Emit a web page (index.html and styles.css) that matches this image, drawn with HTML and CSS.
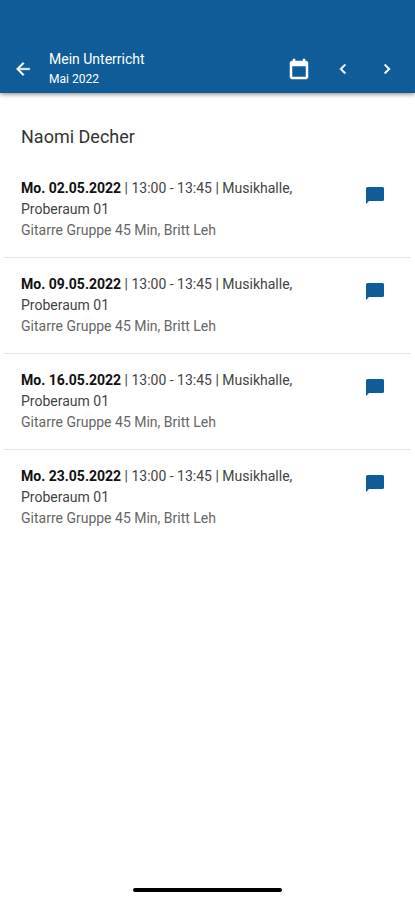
FILE: index.html
```
<!DOCTYPE html>
<html lang="de">
<head>
    <meta charset="UTF-8">
    <meta name="viewport" content="width=device-width, initial-scale=1.0">
    <title>Mein Unterricht</title>
    <link rel="stylesheet" href="styles.css">
</head>
<body>

    <header class="toolbar">
        <button type="button" class="icon-button" aria-label="Zurück">
            <svg width="20" height="20" viewBox="0 0 24 24"><path d="M20 11H7.83l5.59-5.59L12 4l-8 8 8 8 1.41-1.41L7.83 13H20z"/></svg>
        </button>
        <div class="toolbar-title">
            <h1>Mein Unterricht</h1>
            <p>Mai 2022</p>
        </div>
        <button type="button" class="icon-button" aria-label="Monat wählen">
            <svg width="24" height="24" viewBox="0 0 24 24"><path d="M19 4h-1V2h-2v2H8V2H6v2H5c-1.1 0-2 .9-2 2v14c0 1.1.9 2 2 2h14c1.1 0 2-.9 2-2V6c0-1.1-.9-2-2-2zm0 16H5V9h14v11z"/></svg>
        </button>
        <button type="button" class="icon-button" aria-label="Vorheriger Monat">
            <svg width="20" height="20" viewBox="0 0 24 24"><path d="M15.41 7.41L14 6l-6 6 6 6 1.41-1.41L10.83 12z"/></svg>
        </button>
        <button type="button" class="icon-button" aria-label="Nächster Monat">
            <svg width="20" height="20" viewBox="0 0 24 24"><path d="M10 6L8.59 7.41 13.17 12l-4.58 4.59L10 18l6-6z"/></svg>
        </button>
    </header>

    <main>
        <h2>Naomi Decher</h2>

        <ul class="lessons">
            <li class="lesson">
                <div class="lesson-text">
                    <p><strong>Mo. 02.05.2022</strong> | 13:00 - 13:45 | Musikhalle, Proberaum 01</p>
                    <p class="course">Gitarre Gruppe 45 Min, Britt Leh</p>
                </div>
                <button type="button" class="message-button" aria-label="Nachricht">
                    <svg width="18" height="17" viewBox="0 0 18 17"><path d="M1.5 0h15Q18 0 18 1.500v11Q18 14 16.500 14H3L0 17V1.500Q0 0 1.500 0z"/></svg>
                </button>
            </li>
            <li class="lesson">
                <div class="lesson-text">
                    <p><strong>Mo. 09.05.2022</strong> | 13:00 - 13:45 | Musikhalle, Proberaum 01</p>
                    <p class="course">Gitarre Gruppe 45 Min, Britt Leh</p>
                </div>
                <button type="button" class="message-button" aria-label="Nachricht">
                    <svg width="18" height="17" viewBox="0 0 18 17"><path d="M1.5 0h15Q18 0 18 1.500v11Q18 14 16.500 14H3L0 17V1.500Q0 0 1.500 0z"/></svg>
                </button>
            </li>
            <li class="lesson">
                <div class="lesson-text">
                    <p><strong>Mo. 16.05.2022</strong> | 13:00 - 13:45 | Musikhalle, Proberaum 01</p>
                    <p class="course">Gitarre Gruppe 45 Min, Britt Leh</p>
                </div>
                <button type="button" class="message-button" aria-label="Nachricht">
                    <svg width="18" height="17" viewBox="0 0 18 17"><path d="M1.5 0h15Q18 0 18 1.500v11Q18 14 16.500 14H3L0 17V1.500Q0 0 1.500 0z"/></svg>
                </button>
            </li>
            <li class="lesson">
                <div class="lesson-text">
                    <p><strong>Mo. 23.05.2022</strong> | 13:00 - 13:45 | Musikhalle, Proberaum 01</p>
                    <p class="course">Gitarre Gruppe 45 Min, Britt Leh</p>
                </div>
                <button type="button" class="message-button" aria-label="Nachricht">
                    <svg width="18" height="17" viewBox="0 0 18 17"><path d="M1.5 0h15Q18 0 18 1.500v11Q18 14 16.500 14H3L0 17V1.500Q0 0 1.500 0z"/></svg>
                </button>
            </li>
        </ul>
    </main>

    <div class="home-indicator"></div>

</body>
</html>
```
FILE: styles.css
```
* {
    box-sizing: border-box;
}

body {
    font-family: Roboto, sans-serif;
    font-size: 14px;
    line-height: 21px;
    background-color: #ffffff;
    margin: 0;
    min-height: 100vh;
    display: flex;
    flex-direction: column;
    color: #444;
}

h1, h2, p, ul {
    margin: 0;
    padding: 0;
}

button {
    display: flex;
    align-items: center;
    justify-content: center;
    padding: 0;
    border: none;
    background: none;
    cursor: pointer;
}

svg {
    fill: currentColor;
}

/* Toolbar, with room for the status bar on top */
.toolbar {
    display: flex;
    align-items: center;
    padding: 47px 6px 2px 1px;
    background-color: #105c99;
    color: #ffffff;
    box-shadow: 0 1px 5px rgba(0, 0, 0, 0.5);
}

.toolbar-title {
    flex: 1;
    padding-left: 4px;
}

.toolbar-title h1 {
    font-size: 14px;
    font-weight: 400;
    line-height: 20px;
}

.toolbar-title p {
    font-size: 12px;
    line-height: 20px;
}

.icon-button {
    width: 44px;
    height: 44px;
    color: #ffffff;
}

.icon-button svg {
    stroke: currentColor;
    stroke-width: 0.5;
}

/* Lessons */
main {
    flex: 1;
    padding: 32px 4px 0;
}

h2 {
    padding: 0 17px;
    margin-bottom: 13px;
    font-size: 18px;
    font-weight: 400;
    line-height: 24px;
    color: #333;
}

.lessons {
    list-style: none;
}

.lesson {
    display: flex;
    align-items: flex-start;
    padding: 16px 17px;
    border-bottom: 1px solid #e6e6e6;
}

.lesson:last-child {
    border-bottom: none;
}

.lesson-text {
    flex: 1;
    padding-right: 48px;
}

.lesson strong {
    color: #111;
}

.course {
    color: #666;
}

.message-button {
    width: 38px;
    height: 34px;
    color: #105c99;
}

.home-indicator {
    width: 36%;
    height: 4px;
    margin: 0 auto 8px;
    border-radius: 2px;
    background-color: #000;
}
```
